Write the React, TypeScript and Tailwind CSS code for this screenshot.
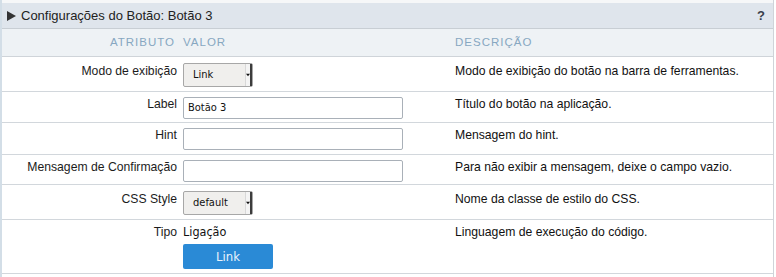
import React from "react";

const inputFont = "font-['DejaVu_Sans_Condensed','DejaVu_Sans',Tahoma,sans-serif]";

function Select({ value, width }: { value: string; width: string }) {
  return (
    <div
      className={`${width} h-[24px] flex items-stretch border border-[#a7a7a7] rounded-[2px] bg-[#f0efed] ${inputFont} text-[11px] text-[#111]`}
    >
      <div className="flex-1 flex items-center pl-[9px]">{value}</div>
      <div className="w-[7px] flex items-center justify-center border-l border-[#d8d8d8] border-r-2 border-r-[#3c3c3c] bg-[#f4f4f4]">
        <svg width="5" height="4" viewBox="0 0 5 4">
          <polygon points="0,0.5 5,0.5 2.5,3.5" fill="#111" />
        </svg>
      </div>
    </div>
  );
}

function TextInput({ value }: { value?: string }) {
  return (
    <div
      className={`w-[220px] h-[22px] border border-[#a9b0b8] rounded-[2px] bg-white flex items-center pl-[4px] ${inputFont} text-[11px] text-[#111]`}
    >
      {value}
    </div>
  );
}

function Row({
  label,
  h,
  children,
  desc,
  pt = "pt-[5px]",
}: {
  label: string;
  h: string;
  children: React.ReactNode;
  desc: string;
  pt?: string;
}) {
  return (
    <div className={`${h} grid grid-cols-[181px_272px_1fr] border-b border-[#d2d7dc] bg-white`}>
      <div className={`text-right pr-[6px] ${pt} leading-[16px] text-[#1c1c1c]`}>{label}</div>
      <div className="pt-[5px]">{children}</div>
      <div className={`${pt} leading-[16px] text-[#111]`}>{desc}</div>
    </div>
  );
}

export default function App() {
  return (
    <div className="w-[776px] h-[277px] bg-white overflow-hidden flex font-['Liberation_Sans',Arial,sans-serif] text-[12.2px]">
      <div className="w-[2px] bg-[#d3dee7] shrink-0" />
      <div className="w-[771px] flex flex-col shrink-0">
        <div className="h-[3px] bg-[#f6f7f8]" />
        <div className="h-[26px] bg-[#dfe5ec] border-b border-[#c8ced4] flex items-center pl-[5px] pr-[8px]">
          <svg width="9" height="10" viewBox="0 0 9 10" className="mr-[5px]">
            <polygon points="0,0 9,5 0,10" fill="#333" />
          </svg>
          <span className="text-[13px] text-[#222]">Configurações do Botão: Botão 3</span>
          <span className="ml-auto font-bold text-[13px] text-[#3a3f4a]">?</span>
        </div>
        <div className="h-[28px] grid grid-cols-[181px_272px_1fr] items-center bg-[#eef2f5] border-b border-[#cfd4d9] text-[11.5px] tracking-[1px] text-[#87a7c1]">
          <div className="text-right pr-[8px]">ATRIBUTO</div>
          <div>VALOR</div>
          <div>DESCRIÇÃO</div>
        </div>
        <Row label="Modo de exibição" h="h-[35px]" desc="Modo de exibição do botão na barra de ferramentas." pt="pt-[6px]">
          <div className="pt-[1px]">
            <Select value="Link" width="w-[70px]" />
          </div>
        </Row>
        <Row label="Label" h="h-[31px]" desc="Título do botão na aplicação." pt="pt-[4px]">
          <TextInput value="Botão 3" />
        </Row>
        <Row label="Hint" h="h-[32px]" desc="Mensagem do hint." pt="pt-[4px]">
          <TextInput />
        </Row>
        <Row label="Mensagem de Confirmação" h="h-[30px]" desc="Para não exibir a mensagem, deixe o campo vazio." pt="pt-[4px]">
          <TextInput />
        </Row>
        <Row label="CSS Style" h="h-[35px]" desc="Nome da classe de estilo do CSS." pt="pt-[6px]">
          <div className="pt-[1px]">
            <Select value="default" width="w-[70px]" />
          </div>
        </Row>
        <div className="h-[54px] grid grid-cols-[181px_272px_1fr] border-b border-[#d2d7dc] bg-white">
          <div className="text-right pr-[6px] pt-[4px] leading-[16px] text-[#1c1c1c]">Tipo</div>
          <div className="pt-[4px] flex flex-col items-start">
            <div className={`leading-[16px] ${inputFont} text-[12.5px] text-[#111]`}>Ligação</div>
            <div
              className={`mt-[4px] w-[90px] h-[25px] rounded-[2px] bg-[#2a8ad6] flex items-center justify-center ${inputFont} text-[13px] text-[#e9f3fc]`}
            >
              Link
            </div>
          </div>
          <div className="pt-[4px] leading-[16px] text-[#111]">Linguagem de execução do código.</div>
        </div>
      </div>
      <div className="w-[1px] bg-[#cfd4d9] shrink-0" />
      <div className="flex-1 bg-white" />
    </div>
  );
}
